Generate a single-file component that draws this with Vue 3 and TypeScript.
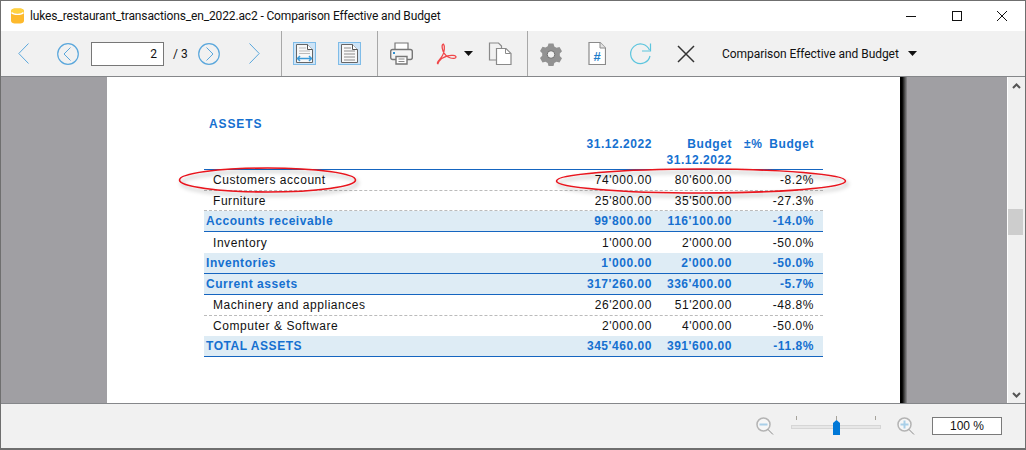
<script setup lang="ts">
interface Row {
  label: string
  a: string
  b: string
  c: string
  kind: 'item' | 'sum'
  h: number
  end?: 'solid' | 'dashed'
}
const rows: Row[] = [
  { label: 'Customers account', a: "74'000.00", b: "80'600.00", c: '-8.2%', kind: 'item', h: 21, end: 'dashed' },
  { label: 'Furniture', a: "25'800.00", b: "35'500.00", c: '-27.3%', kind: 'item', h: 20, end: 'dashed' },
  { label: 'Accounts receivable', a: "99'800.00", b: "116'100.00", c: '-14.0%', kind: 'sum', h: 21, end: 'solid' },
  { label: 'Inventory', a: "1'000.00", b: "2'000.00", c: '-50.0%', kind: 'item', h: 21 },
  { label: 'Inventories', a: "1'000.00", b: "2'000.00", c: '-50.0%', kind: 'sum', h: 21, end: 'solid' },
  { label: 'Current assets', a: "317'260.00", b: "336'400.00", c: '-5.7%', kind: 'sum', h: 21, end: 'solid' },
  { label: 'Machinery and appliances', a: "26'200.00", b: "51'200.00", c: '-48.8%', kind: 'item', h: 21, end: 'dashed' },
  { label: 'Computer & Software', a: "2'000.00", b: "4'000.00", c: '-50.0%', kind: 'item', h: 20 },
  { label: 'TOTAL ASSETS', a: "345'460.00", b: "391'600.00", c: '-11.8%', kind: 'sum', h: 21, end: 'solid' }
]
</script>

<template>
  <div class="win">
    <header class="title">
      <svg class="logo" width="13" height="16" viewBox="0 0 13 16">
        <path d="M0 3.500C0 1 2 .5 6.500.5S13 1 13 3.500v9c0 2.500-2 3-6.500 3S0 15 0 12.500z" fill="#fdb92c" />
        <path d="M0 3.500C0 1 2 .5 6.500.5S13 1 13 3.500C12 6 1 6 0 3.500z" fill="#ffd23f" />
        <path d="M.5 4.500c2 2.400 10 2.400 12 0" fill="none" stroke="#fff" stroke-width="1.300" />
      </svg>
      <span class="title-text">lukes_restaurant_transactions_en_2022.ac2 - Comparison Effective and Budget</span>
      <div class="caption">
        <svg width="12" height="12" viewBox="0 0 12 12"><path d="M1 6.500h10" stroke="#111" /></svg>
        <svg width="12" height="12" viewBox="0 0 12 12"><rect x="1.500" y="1.500" width="9" height="9" fill="none" stroke="#111" /></svg>
        <svg width="12" height="12" viewBox="0 0 12 12"><path d="M1 1l10 10M11 1L1 11" stroke="#111" fill="none" /></svg>
      </div>
    </header>

    <nav class="toolbar">
      <svg class="t t-back" width="11" height="21" viewBox="0 0 11 21"><path d="M10.500 .5L.8 10.500l9.700 10" fill="none" stroke="#5aa7dc" /></svg>
      <svg class="t t-prev" width="22" height="22" viewBox="0 0 22 22"><circle cx="11" cy="11" r="10.300" fill="none" stroke="#5aa7dc" stroke-width="1.200" /><path d="M13.500 4.500L7 11l6.500 6.500" fill="none" stroke="#5aa7dc" /></svg>
      <div class="pagebox">2</div>
      <span class="pagetotal">/ 3</span>
      <svg class="t t-next" width="22" height="22" viewBox="0 0 22 22"><circle cx="11" cy="11" r="10.300" fill="none" stroke="#5aa7dc" stroke-width="1.200" /><path d="M8.500 4.500L15 11l-6.500 6.500" fill="none" stroke="#5aa7dc" /></svg>
      <svg class="t t-fwd" width="11" height="21" viewBox="0 0 11 21"><path d="M.5 .5l9.700 10-9.700 10" fill="none" stroke="#5aa7dc" /></svg>
      <i class="sep s1"></i>
      <div class="toggle t-fitw">
        <svg width="19" height="21" viewBox="0 0 19 21">
          <path d="M1.500 1.500h11l5 5v13h-16z" fill="#f8f8f8" stroke="#666" />
          <path d="M12.500 1.500v5h5" fill="#fff" stroke="#555" />
          <path d="M4 5h7M4 8h11M4 10.500h11" stroke="#bbb" />
          <path d="M2.500 15.500h14M5 13l-2.500 2.500L5 18M14 13l2.500 2.500L14 18" fill="none" stroke="#3a9ad9" stroke-width="1.500" />
        </svg>
      </div>
      <div class="toggle t-fitp">
        <svg width="19" height="21" viewBox="0 0 19 21">
          <path d="M1.500 1.500h11l5 5v13h-16z" fill="#f8f8f8" stroke="#666" />
          <path d="M12.500 1.500v5h5" fill="#fff" stroke="#555" />
          <path d="M4 5h7M4 8h11M4 11h11M4 14h11M4 17h11" stroke="#b0b0b0" stroke-width="1.500" />
        </svg>
      </div>
      <i class="sep s2"></i>
      <svg class="t t-print" width="23" height="23" viewBox="0 0 23 23">
        <path d="M5 8V1h13v7" fill="#fff" stroke="#777" stroke-width="1.200" />
        <rect x=".7" y="7.500" width="21.600" height="10" rx="2" fill="#f4f4f4" stroke="#777" stroke-width="1.400" />
        <rect x="3" y="10" width="2" height="2" fill="#2f8fd0" />
        <path d="M6 14.500h11v7.500H6z" fill="#fff" stroke="#777" stroke-width="1.400" />
        <path d="M8.500 17h6M8.500 19.500h6" stroke="#888" />
      </svg>
      <svg class="t t-pdf" width="21" height="22" viewBox="0 0 21 22">
        <path d="M1.500 20.500C.5 19 4 17 6.500 12.500 8.500 9 9 3 7.500 1.200 6 1 5.500 4 7 8c1.500 3.500 4 6 7.500 7 2.500.7 5.500.5 5.500-1 0-1.800-5-2-8.500-1.200-3.500 1-7 3.500-8.500 5.500-.5.8-1 1.700-1 2.200z" fill="none" stroke="#f0474a" stroke-width="1.300" />
      </svg>
      <svg class="t t-caret" width="9" height="5" viewBox="0 0 9 5"><path d="M0 0h9L4.500 5z" fill="#111" /></svg>
      <svg class="t t-copy" width="24" height="24" viewBox="0 0 24 24">
        <path d="M1.500 1h9l3 3v14h-12z" fill="#f1f1f1" stroke="#8a8a8a" stroke-width="1.200" />
        <path d="M8.500 6.500h9.500l5 5v11h-14.500z" fill="#fff" stroke="#8a8a8a" stroke-width="1.200" />
        <path d="M17.500 6.500v5h5" fill="none" stroke="#8a8a8a" />
      </svg>
      <i class="sep s3"></i>
      <svg class="t t-gear" width="24" height="24" viewBox="0 0 24 24">
        <path d="M9.500 1.500h5l.8 3 2.200 1.300 3-.8 2.500 4.300-2.200 2.200v2.500l2.200 2.200-2.500 4.300-3-.8-2.200 1.300-.8 3h-5l-.8-3-2.200-1.300-3 .8L1 15.900l2.200-2.200v-2.500L1 9l2.500-4.300 3 .8 2.200-1.300z" fill="#929292" />
        <circle cx="12" cy="12.500" r="3.800" fill="#f1f1f1" stroke="#707070" />
      </svg>
      <svg class="t t-hash" width="18" height="23" viewBox="0 0 18 23">
        <path d="M1 .5h11l5.500 5.500v16.500h-16.500z" fill="#fff" stroke="#8a8a8a" stroke-width="1.200" />
        <path d="M12 .5v5.500h5.500" fill="#e4e4e4" stroke="#8a8a8a" />
        <text x="9" y="19" class="hash">#</text>
      </svg>
      <svg class="t t-redo" width="22" height="22" viewBox="0 0 22 22">
        <path d="M20 13A9.800 9.800 0 1 1 19.500 7" fill="none" stroke="#5cc5de" stroke-width="1.200" />
        <path d="M20.500 .5v7.500h-8.500" fill="none" stroke="#5cc5de" stroke-width="1.200" />
      </svg>
      <svg class="t t-x" width="18" height="18" viewBox="0 0 18 18"><path d="M1 1l16 16M17 1L1 17" stroke="#333" stroke-width="1.500" /></svg>
      <span class="combo">Comparison Effective and Budget</span>
      <svg class="t t-caret2" width="9" height="5" viewBox="0 0 9 5"><path d="M0 0h9L4.500 5z" fill="#111" /></svg>
    </nav>

    <main class="viewer">
      <section class="page">
        <div class="report">
          <h2 class="heading">ASSETS</h2>
          <div class="head-row">
            <span class="col-label"></span>
            <span class="col-a">31.12.2022</span>
            <span class="col-b">Budget<br />31.12.2022</span>
            <span class="col-c"><span class="pm">±%</span>Budget</span>
          </div>
          <div
            v-for="r in rows"
            :key="r.label"
            class="row"
            :class="[r.kind, r.end]"
            :style="{ height: r.h + 'px' }"
          >
            <span class="col-label">{{ r.label }}</span>
            <span class="col-a">{{ r.a }}</span>
            <span class="col-b">{{ r.b }}</span>
            <span class="col-c">{{ r.c }}</span>
          </div>
        </div>
        <svg class="marks" width="793" height="326" viewBox="0 0 793 326">
          <defs>
            <filter id="sh" x="-10%" y="-40%" width="120%" height="200%">
              <feDropShadow dx="2" dy="3" stdDeviation="2" flood-color="#000" flood-opacity=".35" />
            </filter>
          </defs>
          <ellipse cx="160.500" cy="103" rx="88" ry="12" fill="none" stroke="#e8121b" stroke-width="1.600" filter="url(#sh)" />
          <ellipse cx="594" cy="104" rx="144.500" ry="12" fill="none" stroke="#e8121b" stroke-width="1.600" filter="url(#sh)" />
        </svg>
      </section>
      <div class="page-shadow"></div>
      <div class="gutter"></div>
      <aside class="scrollbar">
        <svg class="sb-up" width="9" height="6" viewBox="0 0 9 6"><path d="M1 5l3.500-3.500L8 5" fill="none" stroke="#555" stroke-width="2" /></svg>
        <div class="sb-thumb"></div>
        <svg class="sb-down" width="9" height="6" viewBox="0 0 9 6"><path d="M1 1l3.500 3.500L8 1" fill="none" stroke="#555" stroke-width="2" /></svg>
      </aside>
    </main>

    <footer class="status">
      <svg class="mag" width="18" height="19" viewBox="0 0 18 19">
        <circle cx="7.500" cy="7.500" r="6.500" fill="#f6f6f6" stroke="#b4b4b4" stroke-width="1.500" />
        <path d="M3.500 7.500h8" stroke="#a9cfe8" stroke-width="2" />
        <path d="M12 12.500l5 5" stroke="#8a8a8a" />
      </svg>
      <div class="slider">
        <i class="tick tick1"></i><i class="tick tick2"></i><i class="tick tick3"></i>
        <div class="track"></div>
        <svg class="thumb" width="7" height="15" viewBox="0 0 7 15"><path d="M3.500 0L7 3v12H0V3z" fill="#0078d7" /></svg>
      </div>
      <svg class="mag mag2" width="18" height="19" viewBox="0 0 18 19">
        <circle cx="7.500" cy="7.500" r="6.500" fill="#f6f6f6" stroke="#b4b4b4" stroke-width="1.500" />
        <path d="M3.500 7.500h8M7.500 3.500v8" stroke="#a9cfe8" stroke-width="2" />
        <path d="M12 12.500l5 5" stroke="#8a8a8a" />
      </svg>
      <div class="zoombox">100 %</div>
    </footer>
  </div>
</template>

<style>
html, body { margin: 0; background: #fff; overflow: hidden; }
</style>

<style scoped>
.win {
  width: 1026px;
  height: 450px;
  box-sizing: border-box;
  border: 1px solid #6f6f6f;
  border-bottom-width: 2px;
  display: flex;
  flex-direction: column;
  background: #fff;
  font-family: Roboto, sans-serif;
  color: #111;
  overflow: hidden;
}
.title {
  height: 30px;
  flex: none;
  display: flex;
  align-items: center;
  padding-left: 10px;
  background: #fff;
}
.title-text { margin-left: 6px; font-size: 12px; letter-spacing: -0.14px; white-space: nowrap; }
.caption {
  margin-left: auto;
  width: 120px;
  padding-right: 17px;
  box-sizing: border-box;
  display: flex;
  justify-content: space-between;
}
.toolbar {
  height: 45px;
  flex: none;
  display: flex;
  align-items: center;
  background: #f1f1f1;
  border-bottom: 1px solid #85878a;
}
.t { flex: none; display: block; }
.t-back { margin-left: 17px; }
.t-prev { margin-left: 28px; }
.pagebox {
  margin-left: 12px;
  width: 73px;
  height: 24px;
  box-sizing: border-box;
  border: 1px solid #777;
  background: #fff;
  font-size: 12px;
  line-height: 22px;
  text-align: right;
  padding-right: 6px;
}
.pagetotal { margin-left: 9px; width: 25px; font-size: 12px; }
.t-fwd { margin-left: 29px; }
.sep { flex: none; width: 1px; height: 45px; background: #a8a8a8; display: block; }
.s1 { margin-left: 21px; }
.toggle {
  flex: none;
  width: 23px;
  height: 23px;
  box-sizing: border-box;
  background: #cde4f7;
  border: 1px solid #7fbce8;
  display: flex;
  align-items: center;
  justify-content: center;
}
.t-fitw { margin-left: 11px; }
.t-fitp { margin-left: 22px; }
.s2 { margin-left: 16px; }
.t-print { margin-left: 12px; }
.t-pdf { margin-left: 23px; }
.t-caret { margin-left: 7px; }
.t-copy { margin-left: 15px; }
.s3 { margin-left: 15px; }
.t-gear { margin-left: 11px; }
.t-hash { margin-left: 25px; }
.t-redo { margin-left: 24px; }
.t-x { margin-left: 25px; }
.hash { font: bold 13px "Liberation Sans", sans-serif; fill: #1f7fcb; text-anchor: middle; }
.combo { margin-left: 27px; width: 186px; font-size: 12px; letter-spacing: -0.05px; white-space: nowrap; }

.viewer {
  height: 327px;
  box-sizing: border-box;
  flex: none;
  display: flex;
  background: #a09fa3;
  padding-left: 106px;
  border-bottom: 1px solid #85878a;
}
.page {
  position: relative;
  width: 793px;
  flex: none;
  background: #fff;
  font-family: "Liberation Sans", sans-serif;
  font-size: 12px;
  letter-spacing: 0.55px;
}
.report { margin-left: 97px; width: 619px; padding-top: 39px; }
.heading {
  margin: 0 0 0 5px;
  height: 16px;
  font-size: 12px;
  line-height: 16px;
  font-weight: bold;
  letter-spacing: 0.9px;
  color: #1570d0;
}
.head-row {
  display: flex;
  height: 38px;
  box-sizing: border-box;
  padding-top: 4px;
  line-height: 16px;
  font-weight: bold;
  color: #1570d0;
  border-bottom: 1px solid #1565c0;
}
.row {
  display: flex;
  align-items: center;
  box-sizing: border-box;
}
.item { color: #111; }
.item .col-label { padding-left: 9px; }
.sum { background: #deecf5; color: #1570d0; font-weight: bold; }
.sum .col-label { padding-left: 2px; }
.sum.solid { border-bottom: 1px solid #1565c0; }
.row.dashed { border-bottom: 1px dashed #bbb; }
.col-label { width: 300px; flex: none; box-sizing: border-box; white-space: nowrap; }
.col-a { width: 148px; flex: none; text-align: right; white-space: nowrap; }
.col-b { width: 80px; flex: none; text-align: right; white-space: nowrap; }
.col-c { width: 82px; flex: none; text-align: right; white-space: nowrap; }
.pm { margin-right: 7px; }
.marks { position: absolute; left: 0; top: 0; pointer-events: none; }
.page-shadow {
  width: 7px;
  flex: none;
  background: linear-gradient(90deg, #000 0%, #000 30%, #555 70%, #8f8e92 100%);
}
.gutter { flex: 1; }
.scrollbar {
  width: 18px;
  flex: none;
  box-sizing: border-box;
  background: #f0f0f0;
  border-left: 1px solid #fff;
  position: relative;
}
.sb-up { position: absolute; left: 4px; top: 6px; }
.sb-down { position: absolute; left: 4px; bottom: 5px; }
.sb-thumb { position: absolute; left: 0; top: 132px; width: 15px; height: 26px; background: #cdcdcd; }
.status {
  flex: 1;
  display: flex;
  align-items: center;
  background: #f1f1f1;
  padding-left: 755px;
}
.mag { flex: none; }
.slider { position: relative; margin-left: 17px; width: 90px; height: 20px; flex: none; }
.track {
  position: absolute;
  left: 0;
  top: 9px;
  width: 90px;
  height: 4px;
  box-sizing: border-box;
  background: #e7e7e7;
  border: 1px solid #d6d6d6;
}
.tick { position: absolute; top: 0; width: 1px; height: 4px; background: #a6a39b; }
.tick1 { left: 5px; }
.tick2 { left: 45px; }
.tick3 { left: 84px; }
.thumb { position: absolute; left: 42px; top: 4px; }
.mag2 { margin-left: 16px; }
.zoombox {
  margin-left: 17px;
  width: 70px;
  height: 18px;
  box-sizing: border-box;
  background: #fff;
  border: 1px solid #7a7a7a;
  font-family: "Liberation Sans", sans-serif;
  font-size: 12px;
  line-height: 16px;
  text-align: center;
}
</style>
